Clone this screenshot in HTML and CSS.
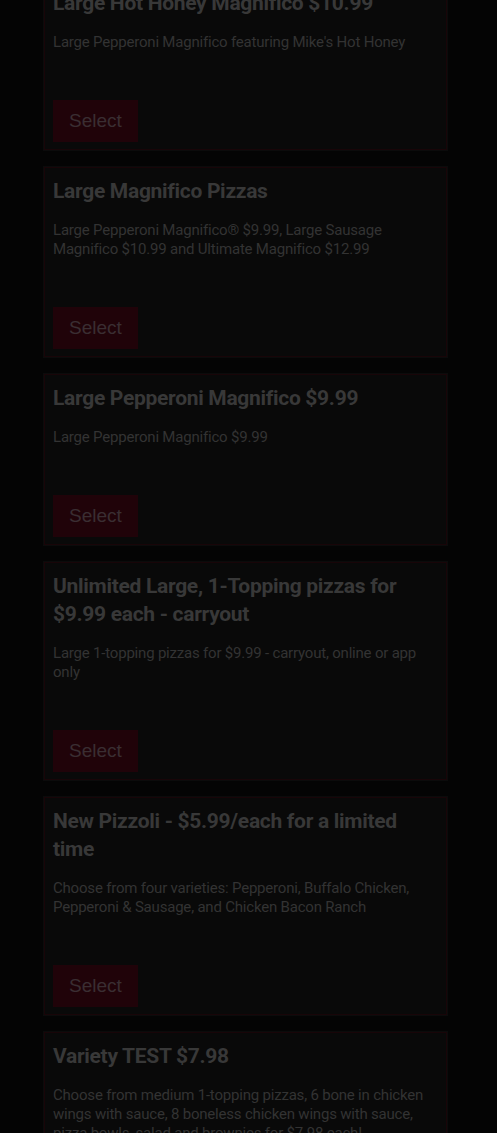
FILE: index.html
```html
<!DOCTYPE html>
<html lang="en">
<head>
    <meta charset="UTF-8">
    <meta name="viewport" content="width=device-width, initial-scale=1.0">
    <title>Specials</title>
    <link rel="stylesheet" href="styles.css">
</head>
<body>
    <div class="overlay-page">
        <div class="deals">

            <!-- Deal cards -->
            <div class="deal-card">
                <h3 class="deal-title">Large Hot Honey Magnifico $10.99</h3>
                <p class="deal-desc">Large Pepperoni Magnifico featuring Mike's Hot Honey</p>
                <button class="select-btn">Select</button>
            </div>

            <div class="deal-card">
                <h3 class="deal-title">Large Magnifico Pizzas</h3>
                <p class="deal-desc">Large Pepperoni Magnifico® $9.99, Large Sausage Magnifico $10.99 and Ultimate Magnifico $12.99</p>
                <button class="select-btn">Select</button>
            </div>

            <div class="deal-card">
                <h3 class="deal-title">Large Pepperoni Magnifico $9.99</h3>
                <p class="deal-desc">Large Pepperoni Magnifico $9.99</p>
                <button class="select-btn">Select</button>
            </div>

            <div class="deal-card">
                <h3 class="deal-title">Unlimited Large, 1-Topping pizzas for $9.99 each - carryout</h3>
                <p class="deal-desc">Large 1-topping pizzas for $9.99 - carryout, online or app only</p>
                <button class="select-btn">Select</button>
            </div>

            <div class="deal-card">
                <h3 class="deal-title">New Pizzoli - $5.99/each for a limited time</h3>
                <p class="deal-desc">Choose from four varieties: Pepperoni, Buffalo Chicken, Pepperoni &amp; Sausage, and Chicken Bacon Ranch</p>
                <button class="select-btn">Select</button>
            </div>

            <div class="deal-card">
                <h3 class="deal-title">Variety TEST $7.98</h3>
                <p class="deal-desc">Choose from medium 1-topping pizzas, 6 bone in chicken wings with sauce, 8 boneless chicken wings with sauce, pizza bowls, salad and brownies for $7.98 each!</p>
                <button class="select-btn">Select</button>
            </div>

        </div>
    </div>
</body>
</html>
```

FILE: styles.css
```css
body {
    font-family: Roboto, "Liberation Sans", sans-serif;
    margin: 0;
    padding: 0;
    background-color: #040404;
    overflow: hidden;
}

.overlay-page {
    width: 403px;
    margin: -21px 0 0 44px;
}

.deals {
    display: flex;
    flex-direction: column;
    gap: 17px;
}

.deal-card {
    background-color: #090909;
    border: 1px solid #180508;
    box-shadow: 0 0 0 1px #0b0b0b;
    padding: 9px 8px 7px;
}

.deal-title {
    margin: 0 0 16px;
    font-size: 21px;
    line-height: 28px;
    font-weight: bold;
    color: #383838;
    letter-spacing: -0.3px;
}

.deal-desc {
    margin: 0 0 48px;
    font-size: 15px;
    line-height: 19px;
    color: #333333;
    letter-spacing: -0.2px;
}

.select-btn {
    display: block;
    width: 85px;
    height: 42px;
    padding: 0 0 0 16px;
    border: none;
    background-color: #200309;
    color: #3a2e32;
    font-family: "Liberation Sans", Arial, sans-serif;
    font-size: 19px;
    text-align: left;
    cursor: pointer;
}
```
